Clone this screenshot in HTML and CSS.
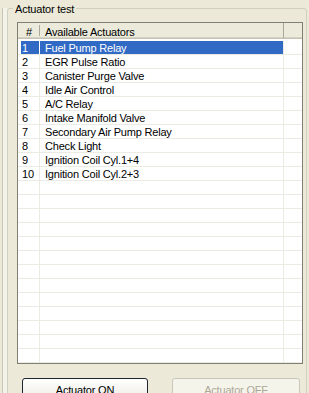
FILE: index.html
```html
<!DOCTYPE html>
<html>
<head>
<meta charset="utf-8">
<link rel="stylesheet" href="styles.css">
</head>
<body>
<div class="win">
  <div class="group">
    <div class="title">Actuator test</div>
    <div class="list">
      <div class="hdr">
        <div class="hc c1">#</div>
        <div class="hc c2">Available Actuators</div>
        <div class="hc c3"></div>
      </div>
      <div class="rows">
        <div class="row sel"><div class="cell c1">1</div><div class="cell c2">Fuel Pump Relay</div><div class="cell c3"></div></div>
        <div class="row"><div class="cell c1">2</div><div class="cell c2">EGR Pulse Ratio</div><div class="cell c3"></div></div>
        <div class="row"><div class="cell c1">3</div><div class="cell c2">Canister Purge Valve</div><div class="cell c3"></div></div>
        <div class="row"><div class="cell c1">4</div><div class="cell c2">Idle Air Control</div><div class="cell c3"></div></div>
        <div class="row"><div class="cell c1">5</div><div class="cell c2">A/C Relay</div><div class="cell c3"></div></div>
        <div class="row"><div class="cell c1">6</div><div class="cell c2">Intake Manifold Valve</div><div class="cell c3"></div></div>
        <div class="row"><div class="cell c1">7</div><div class="cell c2">Secondary Air Pump Relay</div><div class="cell c3"></div></div>
        <div class="row"><div class="cell c1">8</div><div class="cell c2">Check Light</div><div class="cell c3"></div></div>
        <div class="row"><div class="cell c1">9</div><div class="cell c2">Ignition Coil Cyl.1+4</div><div class="cell c3"></div></div>
        <div class="row"><div class="cell c1">10</div><div class="cell c2">Ignition Coil Cyl.2+3</div><div class="cell c3"></div></div>
        <div class="row"><div class="cell c1"></div><div class="cell c2"></div><div class="cell c3"></div></div>
        <div class="row"><div class="cell c1"></div><div class="cell c2"></div><div class="cell c3"></div></div>
        <div class="row"><div class="cell c1"></div><div class="cell c2"></div><div class="cell c3"></div></div>
        <div class="row"><div class="cell c1"></div><div class="cell c2"></div><div class="cell c3"></div></div>
        <div class="row"><div class="cell c1"></div><div class="cell c2"></div><div class="cell c3"></div></div>
        <div class="row"><div class="cell c1"></div><div class="cell c2"></div><div class="cell c3"></div></div>
        <div class="row"><div class="cell c1"></div><div class="cell c2"></div><div class="cell c3"></div></div>
        <div class="row"><div class="cell c1"></div><div class="cell c2"></div><div class="cell c3"></div></div>
        <div class="row"><div class="cell c1"></div><div class="cell c2"></div><div class="cell c3"></div></div>
        <div class="row"><div class="cell c1"></div><div class="cell c2"></div><div class="cell c3"></div></div>
        <div class="row"><div class="cell c1"></div><div class="cell c2"></div><div class="cell c3"></div></div>
        <div class="row"><div class="cell c1"></div><div class="cell c2"></div><div class="cell c3"></div></div>
        <div class="row"><div class="cell c1"></div><div class="cell c2"></div><div class="cell c3"></div></div>
      </div>
    </div>
    <div class="buttons">
      <button class="btn on">Actuator ON</button>
      <button class="btn off" disabled>Actuator OFF</button>
    </div>
  </div>
</div>
</body>
</html>
```
FILE: styles.css
```css
html, body {
  margin: 0;
  height: 393px;
  overflow: hidden;
  background: #ece9d8;
  font-family: "Liberation Sans", Arial, sans-serif;
  font-size: 11px;
  letter-spacing: -0.2px;
  color: #000;
}

.win {
  margin-left: 2px;
  border-left: 1px solid #c8c5b5;
  padding-left: 4px;
  height: 393px;
  background: linear-gradient(to right, #f3f2eb 4px, #ece9d8 4px);
}

.group {
  margin-top: 8px;
  width: 300px;
  height: 400px;
  box-sizing: border-box;
  border: 1px solid #d0d0bf;
  border-radius: 3px;
  background: #ece9d8;
}

.title {
  width: max-content;
  margin: -6px 0 0 5px;
  padding: 0 2px;
  line-height: 13px;
  background: #ece9d8;
}

.list {
  margin: 6px 0 0 9px;
  width: 286px;
  height: 342px;
  box-sizing: border-box;
  border: 1px solid #7f7f74;
  background: #fff;
  overflow: hidden;
}

.hdr {
  display: grid;
  grid-template-columns: 22px 244px 18px;
  height: 16px;
  box-sizing: border-box;
  background: #ebeadb;
  border-bottom: 1px solid #c5c2b2;
  box-shadow: inset 0 -1px #d6d3c6;
}

.hc {
  padding-top: 2px;
  line-height: 14px;
  white-space: nowrap;
  overflow: hidden;
}

.hdr .c1 {
  padding-left: 8px;
  background: linear-gradient(#aca899, #aca899) right 0 top 2px / 1px 11px no-repeat;
}

.hdr .c2 {
  padding-left: 5px;
  background: linear-gradient(#aca899, #aca899) right 0 top 0 / 1px 15px no-repeat;
}

.rows {
  padding-top: 2px;
}

.row {
  display: grid;
  grid-template-columns: 22px 244px 18px;
  height: 14px;
}

.cell {
  box-sizing: border-box;
  height: 14px;
  padding-top: 1px;
  line-height: 12px;
  white-space: nowrap;
  overflow: hidden;
  border-bottom: 1px solid #ebeae3;
}

.cell.c1 {
  padding-left: 4px;
  border-right: 1px solid #ebeae3;
}

.cell.c2 {
  padding-left: 5px;
  border-right: 1px solid #ebeae3;
}

.sel .cell.c1 {
  background: linear-gradient(to right, #fff 3px, #316ac5 3px);
  color: #fff;
  border-right-color: #fff;
}

.sel .cell.c2 {
  background: #316ac5;
  color: #fff;
}

.buttons {
  display: flex;
  gap: 24px;
  margin: 14px 0 0 14px;
}

.btn {
  height: 23px;
  box-sizing: border-box;
  border-radius: 3px;
  font-family: inherit;
  font-size: 11px;
  letter-spacing: -0.2px;
  padding: 0;
}

.btn.on {
  width: 126px;
  border: 1px solid #1e2430;
  background: linear-gradient(#ffffff, #f4f3ee 60%, #e6e3d6);
  color: #000;
}

.btn.off {
  width: 128px;
  border: 1px solid #c9c7ba;
  background: #f5f4ea;
  color: #aca899;
}
```
